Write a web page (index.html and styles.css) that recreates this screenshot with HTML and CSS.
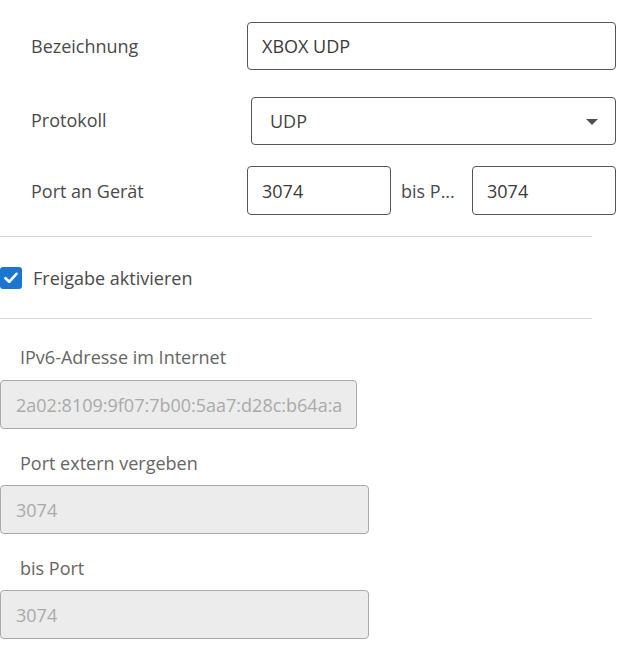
FILE: index.html
```html
<!DOCTYPE html>
<html lang="de">
<head>
  <meta charset="UTF-8">
  <meta name="viewport" content="width=device-width, initial-scale=1.0">
  <title>Portfreigabe</title>
  <link rel="stylesheet" href="styles.css">
</head>
<body>

  <!-- Device settings -->
  <div class="device">
    <div class="row">
      <label class="label" for="name">Bezeichnung</label>
      <input class="input" type="text" id="name" value="XBOX UDP">
    </div>

    <div class="row row-select">
      <label class="label" for="protocol">Protokoll</label>
      <div class="select">
        <span>UDP</span>
        <svg class="caret" width="12" height="6" viewBox="0 0 12 6"><path d="M0 0H12L6 6Z" fill="#4a5058"/></svg>
      </div>
    </div>

    <div class="row row-ports">
      <label class="label" for="portFrom">Port an Gerät</label>
      <div class="ports">
        <input class="input" type="text" id="portFrom" value="3074">
        <span class="bis">bis P...</span>
        <input class="input" type="text" id="portTo" value="3074">
      </div>
    </div>
  </div>

  <hr class="divider">

  <label class="check">
    <span class="box">
      <svg width="14" height="12" viewBox="0 0 14 12"><path d="M1.5 6.2L5.2 9.8L12.5 1.8" fill="none" stroke="#fff" stroke-width="2.6" stroke-linecap="round" stroke-linejoin="round"/></svg>
    </span>
    Freigabe aktivieren
  </label>

  <hr class="divider">

  <!-- Internet side, read only -->
  <div class="external">
    <div class="field">
      <div class="field-label">IPv6-Adresse im Internet</div>
      <input class="input input-off input-ipv6" type="text" value="2a02:8109:9f07:7b00:5aa7:d28c:b64a:a" disabled>
    </div>
    <div class="field">
      <div class="field-label">Port extern vergeben</div>
      <input class="input input-off" type="text" value="3074" disabled>
    </div>
    <div class="field">
      <div class="field-label">bis Port</div>
      <input class="input input-off" type="text" value="3074" disabled>
    </div>
  </div>

</body>
</html>
```

FILE: styles.css
```css
body {
  font-family: "Open Sans", "Noto Sans", sans-serif;
  font-size: 18px;
  color: #4a4a4a;
  background: #fff;
  margin: 0;
  padding: 0;
  width: 617px;
}

.device {
  padding-top: 22px;
}

.row {
  display: flex;
  align-items: center;
  height: 48px;
  margin-bottom: 27px;
}

.row-select {
  margin-bottom: 21px;
}

.row-ports {
  height: 49px;
  margin-bottom: 0;
}

.label {
  width: 216px;
  padding-left: 31px;
  flex-shrink: 0;
}

.row-select .label {
  margin-top: -2px;
}

.input {
  box-sizing: border-box;
  height: 48px;
  width: 369px;
  padding: 0 14px;
  font-family: inherit;
  font-size: 18px;
  color: #3a3a3a;
  border: 1px solid #555;
  border-radius: 4px;
  background: #fff;
  outline: none;
}

.select {
  box-sizing: border-box;
  display: flex;
  align-items: center;
  justify-content: space-between;
  height: 48px;
  width: 365px;
  margin-left: 4px;
  padding: 0 17px 0 18px;
  color: #444;
  border: 1px solid #555;
  border-radius: 4px;
}

.caret {
  margin-top: 1px;
}

.ports {
  display: flex;
  align-items: center;
}

.ports .input {
  width: 144px;
  height: 49px;
}

.bis {
  width: 81px;
  padding-left: 10px;
  box-sizing: border-box;
  white-space: nowrap;
}

.divider {
  width: 592px;
  margin: 21px 0 0;
  border: none;
  border-top: 1px solid #d5d5d5;
}

.check {
  display: flex;
  align-items: center;
  gap: 11px;
  height: 24px;
  margin: 29px 0 28px;
}

.box {
  display: flex;
  align-items: center;
  justify-content: center;
  width: 22px;
  height: 22px;
  background: #1a76d2;
  border-radius: 3px;
}

.check + .divider {
  margin-top: 0;
}

.external {
  padding-top: 26px;
}

.field {
  margin-bottom: 22px;
}

.field-label {
  line-height: 24px;
  padding-left: 20px;
  color: #666;
  margin-bottom: 10px;
}

.input-off {
  height: 49px;
  color: #aaa;
  background: #ebeceb;
  border-color: #aaa;
  padding-left: 15px;
}

.input-ipv6 {
  width: 357px;
  margin-top: 1px;
  padding-right: 4px;
}
```
